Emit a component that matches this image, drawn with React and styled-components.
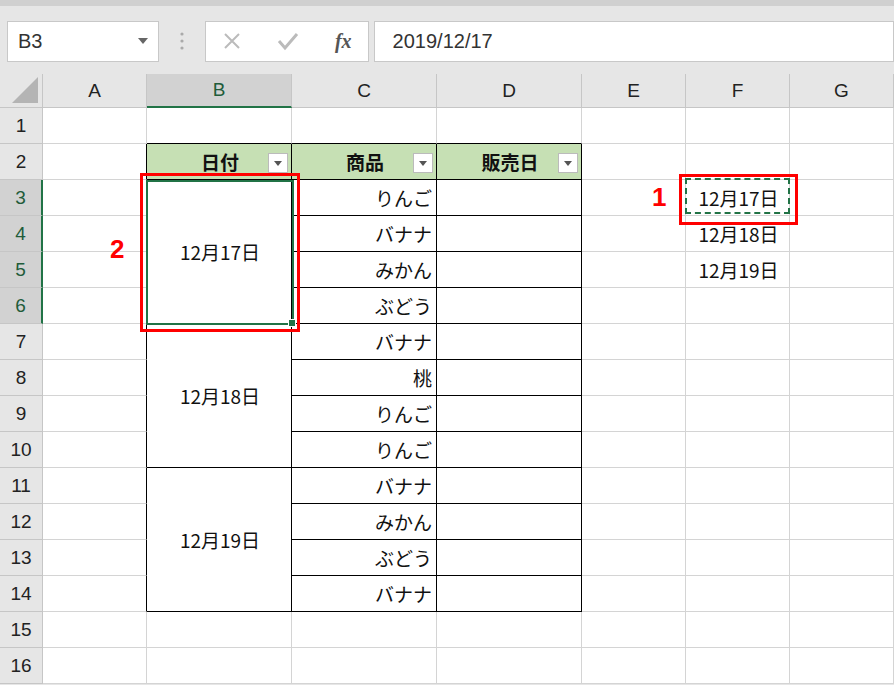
import styled, { createGlobalStyle } from "styled-components";

const Global = createGlobalStyle`
  body { margin: 0; font-family: "Noto Sans CJK JP", "Liberation Sans", sans-serif; background: #fff; }
`;

const Page = styled.div`
  width: 894px;
  height: 685px;
  overflow: hidden;
  background: #e6e6e6;
  border-top: 6px solid #d0d0d0;
  box-sizing: border-box;
`;

const Toolbar = styled.div`
  display: flex;
  align-items: center;
  height: 60px;
  padding: 10px 0 0 7px;
  box-sizing: border-box;
`;

const Box = styled.div`
  display: flex;
  align-items: center;
  height: 41px;
  background: #fff;
  border: 1px solid #c8c8c8;
  box-sizing: border-box;
  font-family: "Liberation Sans", sans-serif;
  font-size: 20px;
  color: #333;
  width: ${(p) => p.$w}px;
  padding: 0 ${(p) => p.$pad ?? 10}px;
  margin-left: ${(p) => p.$ml ?? 0}px;
  justify-content: ${(p) => p.$jc ?? "flex-start"};
`;

const Dots = styled.div`
  width: 46px;
  display: flex;
  justify-content: center;
`;

const Grid = styled.div`
  position: relative;
  margin-top: 8px;
  display: grid;
  grid-template-columns: 43px 104px 145px 145px 145px 104px 104px 104px;
  grid-template-rows: 34px repeat(16, 36px);
  background: #fff;
`;

const ColHead = styled.div`
  background: ${(p) => (p.$sel ? "#d2d2d2" : "#e6e6e6")};
  border-right: 1px solid #c6c6c6;
  border-bottom: ${(p) => (p.$sel ? "2px solid #217346" : "1px solid #c6c6c6")};
  box-sizing: border-box;
  display: flex;
  align-items: center;
  justify-content: center;
  font-family: "Liberation Sans", sans-serif;
  font-size: 19px;
  color: ${(p) => (p.$sel ? "#215c3a" : "#222")};
`;

const RowHead = styled.div`
  background: ${(p) => (p.$sel ? "#d2d2d2" : "#e6e6e6")};
  border-bottom: 1px solid #c6c6c6;
  border-right: ${(p) => (p.$sel ? "2px solid #217346" : "1px solid #c6c6c6")};
  box-sizing: border-box;
  display: flex;
  align-items: center;
  justify-content: center;
  font-family: "Liberation Sans", sans-serif;
  font-size: 19px;
  color: ${(p) => (p.$sel ? "#215c3a" : "#222")};
`;

const Corner = styled.div`
  background: #e6e6e6;
  border-right: 1px solid #c6c6c6;
  border-bottom: 1px solid #c6c6c6;
  position: relative;
  &::after {
    content: "";
    position: absolute;
    right: 4px;
    bottom: 4px;
    border-left: 26px solid transparent;
    border-bottom: 26px solid #b4b4b4;
  }
`;

const Cell = styled.div`
  box-sizing: border-box;
  border-right: 1px solid ${(p) => (p.$br ? "#000" : "#d4d4d4")};
  border-bottom: 1px solid ${(p) => (p.$bb ? "#000" : "#d4d4d4")};
  background: ${(p) => (p.$head ? "#c6e0b4" : "#fff")};
  grid-row: ${(p) => (p.$span ? `span ${p.$span}` : "auto")};
  display: flex;
  align-items: center;
  justify-content: ${(p) => p.$align ?? "center"};
  padding: 0 4px 0 6px;
  font-size: 19px;
  font-weight: ${(p) => (p.$head ? 700 : 400)};
  color: #111;
  position: relative;
`;

const Filter = styled.span`
  position: absolute;
  right: 3px;
  top: 9px;
  width: 20px;
  height: 20px;
  background: #fff;
  border: 1px solid #bbb;
  box-sizing: border-box;
  &::after {
    content: "";
    position: absolute;
    left: 5px;
    top: 7px;
    border-left: 4px solid transparent;
    border-right: 4px solid transparent;
    border-top: 5px solid #555;
  }
`;

const Overlay = styled.div`
  position: absolute;
  left: ${(p) => p.$x}px;
  top: ${(p) => p.$y}px;
  width: ${(p) => p.$w}px;
  height: ${(p) => p.$h}px;
  box-sizing: border-box;
  border: ${(p) => p.$b};
  pointer-events: none;
`;

const Handle = styled.span`
  position: absolute;
  right: -4px;
  bottom: -4px;
  width: 6px;
  height: 6px;
  background: #217346;
  border: 1px solid #fff;
`;

const Label = styled.div`
  position: absolute;
  left: ${(p) => p.$x}px;
  top: ${(p) => p.$y}px;
  color: #ff0000;
  font-family: "Liberation Sans", sans-serif;
  font-weight: 700;
  font-size: 26px;
`;

const cols = ["A", "B", "C", "D", "E", "F", "G"];
const items = ["りんご", "バナナ", "みかん", "ぶどう", "バナナ", "桃", "りんご", "りんご", "バナナ", "みかん", "ぶどう", "バナナ"];
const dates = ["12月17日", "12月18日", "12月19日"];

export default function App() {
  const cells = [];
  cells.push(<Corner key="corner" />);
  cols.forEach((c) => cells.push(<ColHead key={c} $sel={c === "B"}>{c}</ColHead>));
  for (let r = 1; r <= 16; r++) {
    cells.push(<RowHead key={"r" + r} $sel={r >= 3 && r <= 6}>{r}</RowHead>);
    const inTable = r >= 2 && r <= 14;
    cells.push(<Cell key={r + "A"} $br={inTable} />);
    if (r === 2) cells.push(<Cell key="2B" $head $br $bb>日付<Filter /></Cell>);
    else if (r >= 3 && r <= 14) {
      if ((r - 3) % 4 === 0)
        cells.push(<Cell key={r + "B"} $span={4} $br $bb>{dates[(r - 3) / 4]}</Cell>);
    } else cells.push(<Cell key={r + "B"} $bb={r === 1} />);
    if (r === 2) cells.push(<Cell key="2C" $head $br $bb>商品<Filter /></Cell>);
    else if (inTable) cells.push(<Cell key={r + "C"} $br $bb $align="flex-end">{items[r - 3]}</Cell>);
    else cells.push(<Cell key={r + "C"} $bb={r === 1} />);
    if (r === 2) cells.push(<Cell key="2D" $head $br $bb>販売日<Filter /></Cell>);
    else if (inTable) cells.push(<Cell key={r + "D"} $br $bb />);
    else cells.push(<Cell key={r + "D"} $bb={r === 1} />);
    cells.push(<Cell key={r + "E"} />);
    cells.push(<Cell key={r + "F"}>{r >= 3 && r <= 5 ? dates[r - 3] : ""}</Cell>);
    cells.push(<Cell key={r + "G"} />);
  }

  return (
    <>
      <Global />
      <Page>
        <Toolbar>
          <Box $w={152} $jc="space-between">
            B3
            <svg width="10" height="6"><path d="M0 0h10L5 6z" fill="#666" /></svg>
          </Box>
          <Dots>
            <svg width="4" height="20"><circle cx="2" cy="3" r="1.6" fill="#aaa" /><circle cx="2" cy="10" r="1.6" fill="#aaa" /><circle cx="2" cy="17" r="1.6" fill="#aaa" /></svg>
          </Dots>
          <Box $w={164} $pad={16} $jc="space-between">
            <svg width="20" height="20" viewBox="0 0 20 20"><path d="M3 3l14 14M17 3L3 17" stroke="#bbb" strokeWidth="2" /></svg>
            <svg width="24" height="20" viewBox="0 0 24 20"><path d="M3 10l6 7L21 3" stroke="#bbb" strokeWidth="3" fill="none" /></svg>
            <span style={{ fontFamily: "Liberation Serif, serif", fontStyle: "italic", fontWeight: 700, color: "#555" }}>fx</span>
          </Box>
          <Box $w={521} $ml={5} $pad={18}>2019/12/17</Box>
        </Toolbar>
        <Grid>
          {cells}
          <Overlay $x={146} $y={106} $w={148} $h={145} $b="2px solid #217346"><Handle /></Overlay>
          <Overlay $x={140} $y={99} $w={160} $h={159} $b="3px solid #ff0000" />
          <Overlay $x={685} $y={104} $w={105} $h={36} $b="2px dashed #217346" />
          <Overlay $x={679} $y={100} $w={119} $h={51} $b="3px solid #ff0000" />
          <Label $x={652} $y={108}>1</Label>
          <Label $x={110} $y={160}>2</Label>
        </Grid>
      </Page>
    </>
  );
}
